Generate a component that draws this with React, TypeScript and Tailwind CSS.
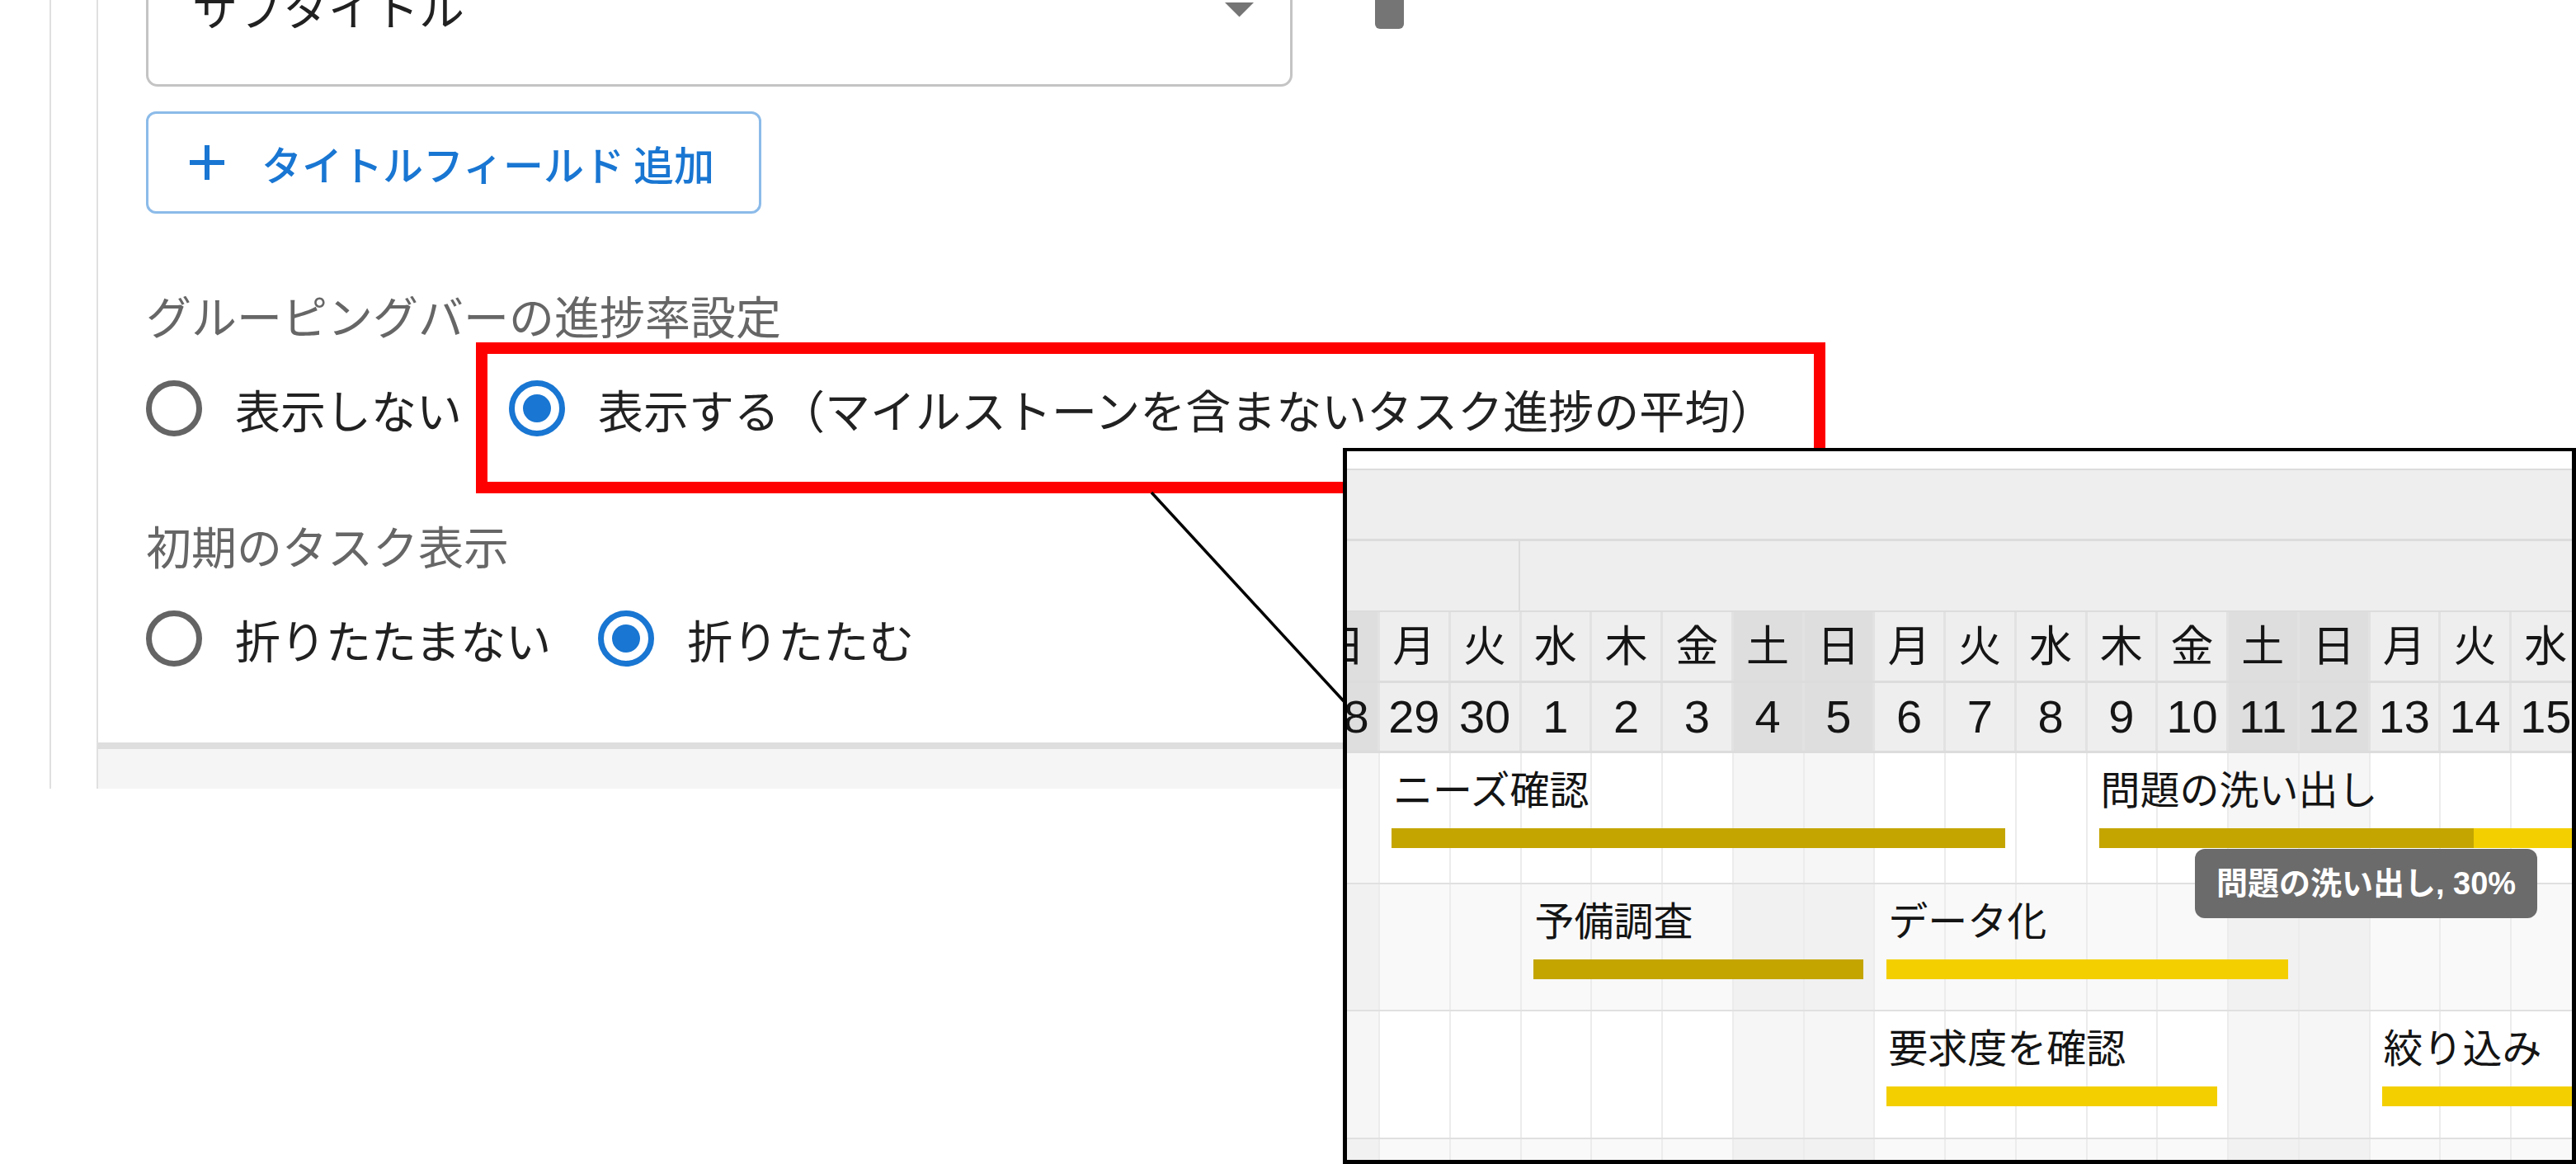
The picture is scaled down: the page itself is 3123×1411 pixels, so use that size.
import React from "react";

const COL = 85.75;
const FIRST = 40;
const GRID = "grid grid-cols-[40px_repeat(17,85.75px)]";

type Day = { w: string; n: number; we?: boolean };

const days: Day[] = [
  { w: "日", n: 28, we: true },
  { w: "月", n: 29 },
  { w: "火", n: 30 },
  { w: "水", n: 1 },
  { w: "木", n: 2 },
  { w: "金", n: 3 },
  { w: "土", n: 4, we: true },
  { w: "日", n: 5, we: true },
  { w: "月", n: 6 },
  { w: "火", n: 7 },
  { w: "水", n: 8 },
  { w: "木", n: 9 },
  { w: "金", n: 10 },
  { w: "土", n: 11, we: true },
  { w: "日", n: 12, we: true },
  { w: "月", n: 13 },
  { w: "火", n: 14 },
  { w: "水", n: 15 },
];

// start / end are indexes of the full day columns (0 = 月 29)
type Task = { label: string; start: number; end: number; progress: number };

const rows: { height: string; alt: boolean; tasks: Task[] }[] = [
  {
    height: "h-[157px]",
    alt: false,
    tasks: [
      { label: "ニーズ確認", start: 0, end: 8, progress: 100 },
      { label: "問題の洗い出し", start: 10, end: 27, progress: 30 },
    ],
  },
  {
    height: "h-[152px]",
    alt: true,
    tasks: [
      { label: "予備調査", start: 2, end: 6, progress: 100 },
      { label: "データ化", start: 7, end: 12, progress: 0 },
    ],
  },
  {
    height: "h-[153px]",
    alt: false,
    tasks: [
      { label: "要求度を確認", start: 7, end: 11, progress: 0 },
      { label: "絞り込み", start: 14, end: 30, progress: 0 },
    ],
  },
  { height: "h-[40px]", alt: true, tasks: [] },
];

function Radio({ checked, label }: { checked?: boolean; label: string }) {
  return (
    <div className="mr-[57px] flex items-center">
      <span
        className={`flex h-[68px] w-[68px] shrink-0 items-center justify-center rounded-full border-[7px] ${
          checked ? "border-[#1976d2]" : "border-[#646464]"
        }`}
      >
        {checked && <span className="h-[34px] w-[34px] rounded-full bg-[#1976d2]" />}
      </span>
      <span className="ml-[40px] whitespace-nowrap text-[55px] leading-none text-[#212121]">
        {label}
      </span>
    </div>
  );
}

function BodyRow({ height, alt, tasks }: { height: string; alt: boolean; tasks: Task[] }) {
  return (
    <div className={`relative ${height}`}>
      <div className={`${GRID} h-full`}>
        {days.map((d, i) => (
          <div
            key={i}
            className={`border-r-2 border-[#ececec] ${
              d.we ? (alt ? "bg-[#f1f1f1]" : "bg-[#f6f6f6]") : alt ? "bg-[#f9f9f9]" : "bg-white"
            }`}
          />
        ))}
      </div>

      {tasks.map((t) => {
        const left = FIRST + COL * t.start + 14;
        const width = COL * (t.end - t.start + 1) - 28;
        return (
          <React.Fragment key={t.label}>
            <div
              className="absolute top-[22px] whitespace-nowrap text-[48px] leading-[48px] text-[#141414]"
              style={{ left: left + 2 }}
            >
              {t.label}
            </div>
            <div className="absolute top-[91px] h-[24px] bg-[#f4cf00]" style={{ left, width }}>
              <div className="h-full bg-[#c4a500]" style={{ width: `${t.progress}%` }} />
            </div>
          </React.Fragment>
        );
      })}
    </div>
  );
}

function GanttInset() {
  return (
    <div className="absolute left-[1628px] top-[543px] h-[868px] w-[1495px] overflow-hidden border-[5px] border-t-4 border-black bg-white font-['Liberation_Sans','Noto_Sans_CJK_JP',sans-serif] text-[#151515]">
      <div className="h-[21px] bg-white" />
      <div className="h-[2px] bg-[#dcdcdc]" />
      <div className="h-[83px] bg-[#eeeeee]" />
      <div className="h-[3px] bg-[#dcdcdc]" />
      <div className="flex h-[84px] bg-[#eeeeee]">
        <div className="w-[210px] border-r-2 border-[#dcdcdc]" />
      </div>
      <div className="h-[2px] bg-[#dcdcdc]" />

      <div className={`${GRID} h-[83px]`}>
        {days.map((d, i) => (
          <div
            key={i}
            className={`flex items-center overflow-hidden border-r-[3px] border-[#e2e2e2] text-[52px] leading-none ${
              i === 0 ? "justify-end" : "justify-center"
            } ${d.we ? "bg-[#dedede]" : "bg-[#eeeeee]"}`}
          >
            <span className={i === 0 ? "w-[83px] shrink-0 text-center" : ""}>{d.w}</span>
          </div>
        ))}
      </div>
      <div className="h-[3px] bg-[#dcdcdc]" />

      <div className={`${GRID} h-[82px]`}>
        {days.map((d, i) => (
          <div
            key={i}
            className={`flex items-center overflow-hidden border-r-[3px] border-[#e2e2e2] text-[56px] leading-none ${
              i === 0 ? "justify-end" : "justify-center"
            } ${d.we ? "bg-[#dedede]" : "bg-[#eeeeee]"}`}
          >
            <span className={i === 0 ? "w-[83px] shrink-0 text-center" : ""}>{d.n}</span>
          </div>
        ))}
      </div>
      <div className="h-[3px] bg-[#dcdcdc]" />

      {rows.map((r, i) => (
        <React.Fragment key={i}>
          <BodyRow height={r.height} alt={r.alt} tasks={r.tasks} />
          {i < rows.length - 1 && <div className="h-[2px] bg-[#e0e0e0]" />}
        </React.Fragment>
      ))}

      {/* hover tooltip over 問題の洗い出し */}
      <div className="absolute left-[1028px] top-[482px] flex h-[84px] w-[415px] items-center justify-center rounded-[12px] bg-[#6b6b6b] text-[38px] font-semibold text-white">
        問題の洗い出し, 30%
      </div>
    </div>
  );
}

export default function App() {
  return (
    <div className="relative h-[1411px] w-[3123px] overflow-hidden bg-white font-['Noto_Sans_CJK_JP',sans-serif]">
      <div className="flex items-start">
        <div className="w-[60px] shrink-0" />
        <div className="flex h-[956px] flex-1 border-l-2 border-[#e0e0e0] pl-[55px]">
          <div className="flex flex-1 flex-col border-l-2 border-[#e0e0e0]">
            <div className="border-b-[8px] border-[#dedede] bg-white pb-[86px] pl-[58px]">
              <div className="flex items-start">
                <div className="-mt-[90px] flex h-[195px] w-[1390px] items-center rounded-[14px] border-[3px] border-[#c4c4c4] pl-[53px] pr-[44px]">
                  <span className="flex-1 text-[55px] leading-none text-[#212121]">サブタイトル</span>
                  <svg width="35" height="18" viewBox="0 0 35 18" className="mt-[9px]">
                    <polygon points="0,0 35,0 17.5,17.5" fill="#757575" />
                  </svg>
                </div>
                <div className="ml-[100px] h-[35px] w-[35px] rounded-b-[6px] bg-[#757575]" />
              </div>

              <button className="mt-[30px] flex h-[124px] w-[746px] items-center rounded-[12px] border-[3px] border-[#8cbbe9] pl-[50px] text-[#1976d2]">
                <svg width="42" height="42" viewBox="5 5 14 14">
                  <path d="M19 13h-6v6h-2v-6H5v-2h6V5h2v6h6v2z" fill="#1976d2" />
                </svg>
                <span className="ml-[45px] whitespace-nowrap text-[49px] font-medium leading-none">
                  タイトルフィールド 追加
                </span>
              </button>

              <div className="mt-[82px] flex h-[80px] items-center text-[55px] leading-none text-[#666666]">
                グルーピングバーの進捗率設定
              </div>
              <div className="mt-[34px] flex h-[80px] items-center">
                <Radio label="表示しない" />
                <Radio checked label="表示する（マイルストーンを含まないタスク進捗の平均）" />
              </div>

              <div className="mt-[85px] flex h-[80px] items-center text-[55px] leading-none text-[#666666]">
                初期のタスク表示
              </div>
              <div className="mt-[34px] flex h-[80px] items-center">
                <Radio label="折りたたまない" />
                <Radio checked label="折りたたむ" />
              </div>
            </div>
            <div className="h-[48px] bg-[#f5f5f5]" />
          </div>
        </div>
      </div>

      {/* highlight frame */}
      <div className="absolute left-[577px] top-[415px] h-[183px] w-[1636px] border-[14px] border-[#ff0000]" />

      {/* callout leader */}
      <svg className="pointer-events-none absolute left-0 top-0" width="3123" height="1411">
        <line x1="1396" y1="597" x2="1630" y2="851" stroke="#000" strokeWidth="3.5" />
      </svg>

      <GanttInset />
    </div>
  );
}
